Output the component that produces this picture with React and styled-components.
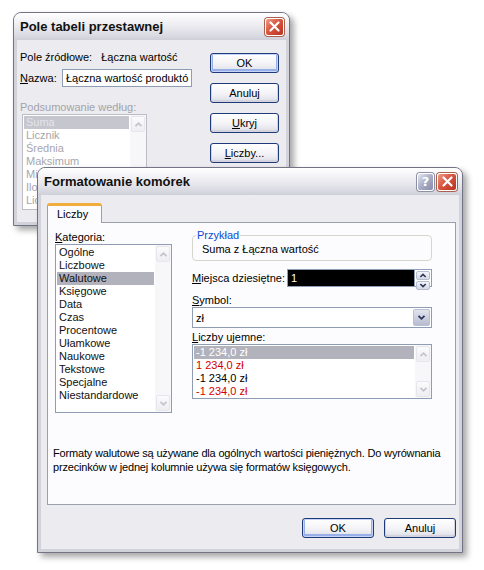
import styled, { createGlobalStyle } from 'styled-components';

const GlobalStyle = createGlobalStyle`
  body {
    margin: 0;
    background: #fff;
    font-family: "Liberation Sans", Arial, sans-serif;
    font-size: 11px;
    color: #000;
  }
`;

const Desktop = styled.div`
  position: relative;
  width: 484px;
  height: 570px;
  overflow: hidden;
`;

// windows sit on a free desktop canvas, so they are placed by coordinates
const Window = styled.div`
  position: absolute;
  left: ${(p) => p.$x}px;
  top: ${(p) => p.$y}px;
  width: ${(p) => p.$w}px;
  height: ${(p) => p.$h}px;
  box-sizing: border-box;
  display: flex;
  flex-direction: column;
  background: #d2d2da;
  border: 1px solid #737386;
  border-radius: 8px 8px 0 0;
  box-shadow: 4px 4px 6px rgba(0, 0, 0, 0.35);
`;

const TitleBar = styled.div`
  height: 27px;
  flex: none;
  display: flex;
  align-items: center;
  padding: 0 5px 0 6px;
  border-radius: 7px 7px 0 0;
  background: linear-gradient(#ffffff, #f1f1f5 35%, #dcdce4 80%, #cfcfd8);
  font-weight: bold;
  font-size: 13px;
  color: #111;
`;

const Title = styled.span`
  flex: 1;
`;

const TitleButtons = styled.div`
  display: flex;
  gap: 3px;
`;

const CaptionButton = styled.div`
  width: ${(p) => p.$w || 19}px;
  height: 18px;
  box-sizing: border-box;
  border: 1px solid #fff;
  border-radius: 3px;
  display: flex;
  align-items: center;
  justify-content: center;
  color: #fff;
  font: bold 13px "DejaVu Sans", sans-serif;
  background: ${(p) =>
    p.$kind === 'close'
      ? 'linear-gradient(135deg, #f29a86, #d8553f 45%, #b83220)'
      : 'linear-gradient(135deg, #e4e6f0, #a9aec6 50%, #858ba8)'};
  box-shadow: 0 0 0 1px ${(p) => (p.$kind === 'close' ? '#a8624f' : '#8d90a4')};
`;

const Client = styled.div`
  flex: 1;
  margin: 0 3px 3px;
  background: #ecebef;
  box-sizing: border-box;
`;

const Underline = styled.span`
  text-decoration: underline;
`;

/* ---------- generic controls ---------- */

const Button = styled.div`
  width: ${(p) => p.$w || 69}px;
  height: 20px;
  box-sizing: border-box;
  border: 1px solid #1f3a78;
  border-radius: 3px;
  display: flex;
  align-items: center;
  justify-content: center;
  background: linear-gradient(#ffffff, #f3f3f7 55%, #dcdce6);
  box-shadow: ${(p) =>
    p.$default ? 'inset 0 0 0 1px #c6d4f7, inset 0 -1px 0 2px #98b0e8' : 'inset 0 -1px 0 1px #d4d4de'};
  color: #000;
`;

const TextField = styled.div`
  width: ${(p) => p.$w}px;
  height: 18px;
  box-sizing: border-box;
  border: 1px solid #8e9cb4;
  background: ${(p) => (p.$dark ? '#000' : '#fff')};
  color: ${(p) => (p.$dark ? '#fff' : '#000')};
  display: flex;
  align-items: center;
  padding: 0 3px;
  white-space: nowrap;
  overflow: hidden;
`;

const ListBox = styled.div`
  display: flex;
  width: ${(p) => p.$w}px;
  height: ${(p) => p.$h}px;
  box-sizing: border-box;
  border: 1px solid ${(p) => (p.$disabled ? '#bdbdc8' : '#8e9cb4')};
  background: #fff;
  margin-left: ${(p) => p.$ml || 0}px;
  overflow: hidden;
`;

const Items = styled.div`
  flex: 1;
  padding: 1px;
  min-width: 0;
`;

const Item = styled.div`
  height: 13px;
  line-height: 13px;
  padding-left: 2px;
  white-space: nowrap;
  color: ${(p) => p.$color || '#000'};
  background: ${(p) => (p.$selected ? p.$selBg || '#b2b2bc' : 'transparent')};
`;

const ScrollBar = styled.div`
  width: 16px;
  flex: none;
  display: flex;
  flex-direction: column;
  justify-content: space-between;
  background: #f7f7f9;
  padding: 1px 0;
`;

const ScrollArrow = styled.div`
  height: 16px;
  box-sizing: border-box;
  margin: 0 1px;
  border: 1px solid #e6e6ec;
  border-radius: 2px;
  background: linear-gradient(#fbfbfd, #eeeef3);
  display: flex;
  align-items: center;
  justify-content: center;
`;

const Chevron = ({ dir = 'down', color = '#c4c4cc', w = 9 }) => (
  <svg width={w} height="7" viewBox="0 0 9 7">
    <path
      d={dir === 'up' ? 'M1.5 5.2 L4.5 2.2 L7.5 5.2' : 'M1.5 1.8 L4.5 4.8 L7.5 1.8'}
      fill="none"
      stroke={color}
      strokeWidth="1.8"
    />
  </svg>
);

function ScrollList({ items, w, h, disabled, ml, showDown = true }) {
  return (
    <ListBox $w={w} $h={h} $disabled={disabled} $ml={ml}>
      <Items>
        {items.map((it, i) => (
          <Item key={i} $selected={it.selected} $selBg={it.selBg} $color={it.color}>
            {it.text}
          </Item>
        ))}
      </Items>
      <ScrollBar>
        <ScrollArrow>
          <Chevron dir="up" />
        </ScrollArrow>
        {showDown && (
          <ScrollArrow>
            <Chevron dir="down" />
          </ScrollArrow>
        )}
      </ScrollBar>
    </ListBox>
  );
}

/* ---------- Pole tabeli przestawnej ---------- */

const PivotBody = styled.div`
  display: grid;
  grid-template-columns: 172px 69px;
  column-gap: 18px;
  padding: 10px 0 0 3px;
`;

const Column = styled.div`
  display: flex;
  flex-direction: column;
`;

const InfoRow = styled.div`
  height: 14px;
  line-height: 14px;
  display: flex;
  gap: 9px;
  white-space: nowrap;
`;

const NameRow = styled.div`
  margin-top: 5px;
  display: flex;
  align-items: center;
  justify-content: space-between;
`;

const Caption = styled.div`
  margin-top: ${(p) => p.$mt || 0}px;
  line-height: ${(p) => p.$lh || 14}px;
  color: ${(p) => (p.$disabled ? '#a3a3ab' : '#000')};
  white-space: nowrap;
`;

const ButtonStack = styled.div`
  display: flex;
  flex-direction: column;
  gap: 10px;
  padding-top: 3px;
`;

/* ---------- Formatowanie komórek ---------- */

const FormatBody = styled.div`
  padding: 8px 3px 0 6px;
  display: flex;
  flex-direction: column;
`;

const TabStrip = styled.div`
  display: flex;
`;

const Tab = styled.div`
  position: relative;
  z-index: 1;
  width: 55px;
  height: 20px;
  margin-bottom: -1px;
  box-sizing: border-box;
  border: 1px solid #9ba0ac;
  border-top: 3px solid #f2ae3c;
  border-bottom: none;
  border-radius: 3px 3px 0 0;
  background: #fcfcfe;
  padding-left: 9px;
  line-height: 16px;
`;

const TabPanel = styled.div`
  width: 409px;
  height: 283px;
  box-sizing: border-box;
  border: 1px solid #9ba0ac;
  background: #fcfcfe;
  padding: 7px 0 0 7px;
  display: flex;
  flex-direction: column;
`;

const PanelGrid = styled.div`
  display: grid;
  grid-template-columns: 117px 240px;
  column-gap: 20px;
`;

const GroupBox = styled.fieldset`
  margin: -2px 0 0;
  padding: 0 9px 4px;
  border: 1px solid #d6d6ce;
  border-radius: 4px;
  line-height: 14px;

  legend {
    padding: 0 1px;
    margin-left: -6px;
    color: #0d4ad2;
  }
`;

const DecimalRow = styled.div`
  margin-top: 8px;
  display: flex;
  align-items: center;
  justify-content: space-between;
`;

const SpinGroup = styled.div`
  display: flex;
`;

const SpinButtons = styled.div`
  width: 17px;
  height: 18px;
  box-sizing: border-box;
  border: 1px solid #8e9cb4;
  border-left: none;
  background: #fff;
  display: flex;
  flex-direction: column;
  gap: 1px;
  padding: 1px;
`;

const SpinHalf = styled.div`
  flex: 1;
  border: 1px solid #b4bdd0;
  border-radius: 2px;
  background: linear-gradient(#f4f5fa, #d6d9e6);
  display: flex;
  align-items: center;
  justify-content: center;
`;

const Combo = styled.div`
  height: 21px;
  box-sizing: border-box;
  border: 1px solid #8e9cb4;
  background: #fff;
  display: flex;
  align-items: center;
  padding: 0 1px 0 3px;
`;

const ComboValue = styled.span`
  flex: 1;
`;

const DropButton = styled.div`
  width: 17px;
  height: 17px;
  box-sizing: border-box;
  border: 1px solid #b9bed2;
  border-radius: 2px;
  background: linear-gradient(#e2e4ee, #b8bcd0);
  display: flex;
  align-items: center;
  justify-content: center;
`;

const Description = styled.div`
  margin-top: 33px;
  margin-left: -2px;
  line-height: 14px;
  letter-spacing: -0.18px;
  white-space: nowrap;
`;

const Footer = styled.div`
  margin-top: 13px;
  display: flex;
  justify-content: flex-end;
  gap: 10px;
  width: 409px;
`;

const sumItems = [
  { text: 'Suma', selected: true, selBg: '#c6c6ce', color: '#e4e4ea' },
  { text: 'Licznik', color: '#a6a6ae' },
  { text: 'Średnia', color: '#a6a6ae' },
  { text: 'Maksimum', color: '#a6a6ae' },
  { text: 'Minimum', color: '#a6a6ae' },
  { text: 'Iloczyn', color: '#a6a6ae' },
  { text: 'Licznik num', color: '#a6a6ae' },
];

const categories = [
  'Ogólne',
  'Liczbowe',
  'Walutowe',
  'Księgowe',
  'Data',
  'Czas',
  'Procentowe',
  'Ułamkowe',
  'Naukowe',
  'Tekstowe',
  'Specjalne',
  'Niestandardowe',
].map((text) => ({ text, selected: text === 'Walutowe', color: '#111' }));

const negatives = [
  { text: '-1 234,0 zł', selected: true, color: '#fff' },
  { text: '1 234,0 zł', color: '#d40000' },
  { text: '-1 234,0 zł' },
  { text: '-1 234,0 zł', color: '#d40000' },
];

const CloseIcon = () => (
  <svg width="11" height="11" viewBox="0 0 11 11">
    <path d="M1.5 1.5 L9.5 9.5 M9.5 1.5 L1.5 9.5" stroke="#fff" strokeWidth="2.2" strokeLinecap="round" />
  </svg>
);

export default function App() {
  return (
    <Desktop>
      <GlobalStyle />

      <Window $x={13} $y={12} $w={277} $h={214}>
        <TitleBar>
          <Title>Pole tabeli przestawnej</Title>
          <TitleButtons>
            <CaptionButton $kind="close">
              <CloseIcon />
            </CaptionButton>
          </TitleButtons>
        </TitleBar>
        <Client>
          <PivotBody>
            <Column>
              <InfoRow>
                <span>Pole źródłowe:</span>
                <span>Łączna wartość</span>
              </InfoRow>
              <NameRow>
                <span>
                  <Underline>N</Underline>azwa:
                </span>
                <TextField $w={130}>Łączna wartość produktó</TextField>
              </NameRow>
              <Caption $mt={13} $disabled>
                Podsumowanie według:
              </Caption>
              <ScrollList items={sumItems} w={125} h={96} ml={2} disabled showDown={false} />
            </Column>
            <ButtonStack>
              <Button $default>OK</Button>
              <Button>Anuluj</Button>
              <Button>
                <Underline>U</Underline>kryj
              </Button>
              <Button>
                <Underline>L</Underline>iczby...
              </Button>
            </ButtonStack>
          </PivotBody>
        </Client>
      </Window>

      <Window $x={37} $y={167} $w={426} $h={386}>
        <TitleBar>
          <Title>Formatowanie komórek</Title>
          <TitleButtons>
            <CaptionButton $w={17}>?</CaptionButton>
            <CaptionButton $kind="close" $w={20}>
              <CloseIcon />
            </CaptionButton>
          </TitleButtons>
        </TitleBar>
        <Client>
          <FormatBody>
            <TabStrip>
              <Tab>Liczby</Tab>
            </TabStrip>
            <TabPanel>
              <PanelGrid>
                <Column>
                  <Caption>
                    <Underline>K</Underline>ategoria:
                  </Caption>
                  <ScrollList items={categories} w={117} h={169} />
                </Column>
                <Column>
                  <GroupBox>
                    <legend>Przykład</legend>
                    Suma z Łączna wartość
                  </GroupBox>
                  <DecimalRow>
                    <span>
                      <Underline>M</Underline>iejsca dziesiętne:
                    </span>
                    <SpinGroup>
                      <TextField $dark $w={128}>
                        1
                      </TextField>
                      <SpinButtons>
                        <SpinHalf>
                          <Chevron dir="up" color="#2c3658" w={8} />
                        </SpinHalf>
                        <SpinHalf>
                          <Chevron dir="down" color="#2c3658" w={8} />
                        </SpinHalf>
                      </SpinButtons>
                    </SpinGroup>
                  </DecimalRow>
                  <Caption $mt={7} $lh={13}>
                    <Underline>S</Underline>ymbol:
                  </Caption>
                  <Combo>
                    <ComboValue>zł</ComboValue>
                    <DropButton>
                      <Chevron dir="down" color="#2c3658" />
                    </DropButton>
                  </Combo>
                  <Caption $mt={2}>
                    <Underline>L</Underline>iczby ujemne:
                  </Caption>
                  <ScrollList items={negatives} w={240} h={55} ml={0} />
                </Column>
              </PanelGrid>
              <Description>
                Formaty walutowe są używane dla ogólnych wartości pieniężnych. Do wyrównania
                <br />
                przecinków w jednej kolumnie używa się formatów księgowych.
              </Description>
            </TabPanel>
            <Footer>
              <Button $w={72} $default>
                OK
              </Button>
              <Button $w={72}>Anuluj</Button>
            </Footer>
          </FormatBody>
        </Client>
      </Window>
    </Desktop>
  );
}
